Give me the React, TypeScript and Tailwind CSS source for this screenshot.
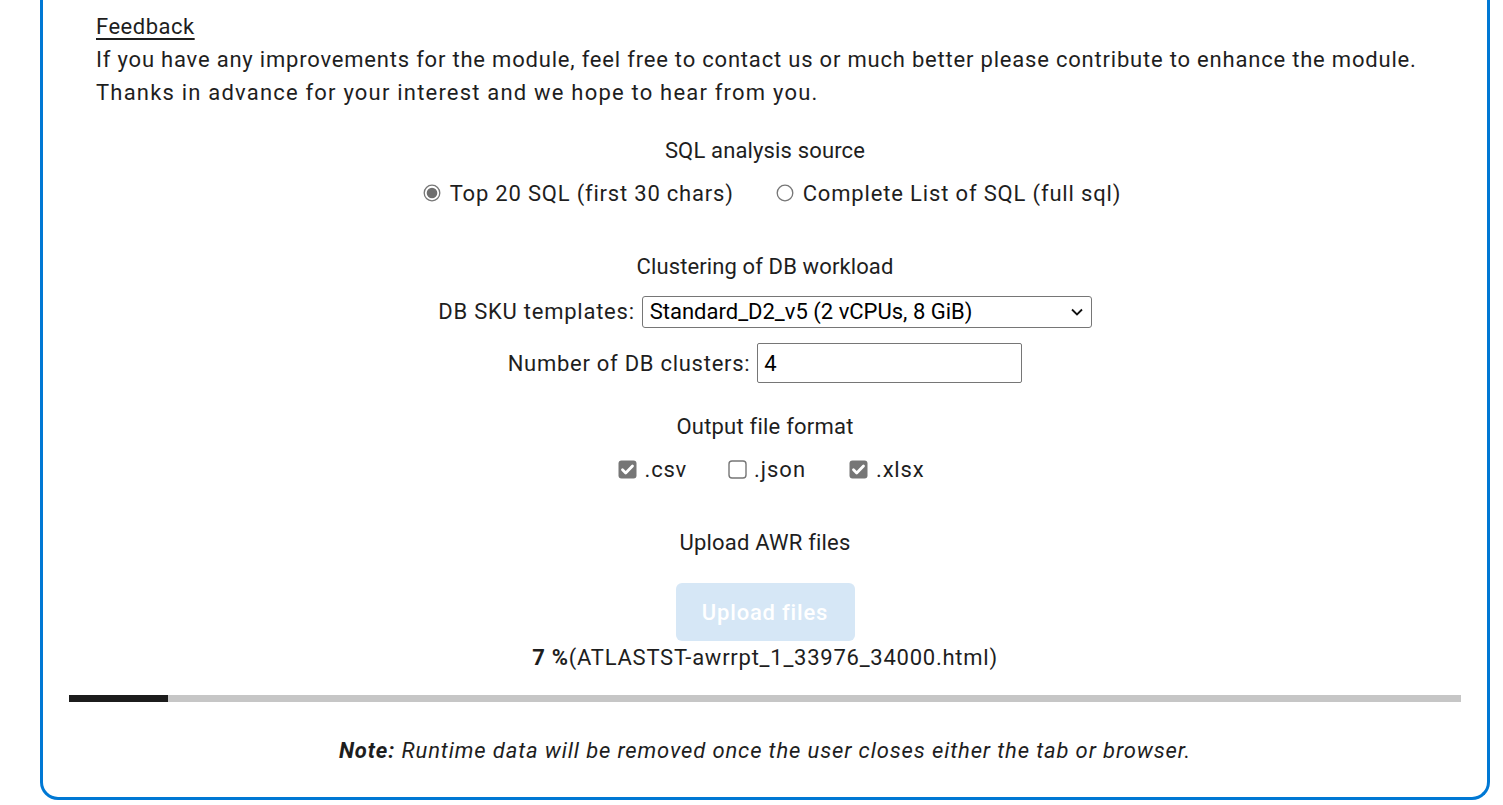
import React from "react";

function Radio({ checked }: { checked?: boolean }) {
  return (
    <svg width="18" height="18" viewBox="0 0 18 18" className="shrink-0">
      <circle cx="9" cy="9" r="7.8" fill="white" stroke="#767676" strokeWidth="1.3" />
      {checked && <circle cx="9" cy="9" r="5.3" fill="#6e6e6e" />}
    </svg>
  );
}

function Check({ checked }: { checked?: boolean }) {
  return (
    <svg width="19" height="19" viewBox="0 0 19 19" className="shrink-0">
      {checked ? (
        <>
          <rect x="0.5" y="0.5" width="18" height="18" rx="3" fill="#767676" />
          <path d="M4.5 9.8l3.2 3.2 6.8-7" stroke="white" strokeWidth="2.8" fill="none" strokeLinecap="round" strokeLinejoin="round" />
        </>
      ) : (
        <rect x="1" y="1" width="17" height="17" rx="3" fill="white" stroke="#767676" strokeWidth="1.4" />
      )}
    </svg>
  );
}

export default function App() {
  return (
    <div className="w-[1503px] h-[805px] bg-white overflow-hidden" style={{ fontFamily: "Roboto, 'Noto Sans', sans-serif" }}>
      <div className="ml-[40px] w-[1450px] border-x-[3px] border-b-[3px] border-[#0078d4] rounded-b-[18px] text-[22px] leading-[33px] text-[#1e1e1e] pt-[9.5px] pb-[29.5px]">
        <div className="pl-[53px]">
          <div className="underline underline-offset-[4px] tracking-[0.5px]">Feedback</div>
          <div className="tracking-[0.8px]">If you have any improvements for the module, feel free to contact us or much better please contribute to enhance the module.</div>
          <div className="tracking-[1.2px]">Thanks in advance for your interest and we hope to hear from you.</div>
        </div>

        <div className="flex flex-col items-center">
          <div className="mt-[25px] tracking-[0.15px]">SQL analysis source</div>
          <div className="mt-[10px] flex items-center pl-[14px]">
            <label className="flex items-center">
              <Radio checked />
              <span className="ml-[9px] tracking-[0.8px]">Top 20 SQL (first 30 chars)</span>
            </label>
            <label className="flex items-center ml-[42px]">
              <Radio />
              <span className="ml-[9px] tracking-[0.84px]">Complete List of SQL (full sql)</span>
            </label>
          </div>

          <div className="mt-[40px] tracking-[0.12px]">Clustering of DB workload</div>
          <div className="mt-[12.5px] flex items-center">
            <span className="tracking-[0.76px]">DB SKU templates:</span>
            <div className="ml-[7px] relative w-[450px] h-[32px] border border-[#767676] rounded-[3px] flex items-center px-[7px] text-black">
              <span>Standard_D2_v5 (2 vCPUs, 8 GiB)</span>
              <svg className="absolute right-[7px] top-[9px]" width="14" height="12" viewBox="0 0 14 12" fill="none">
                <path d="M2 3.5l5 5 5-5" stroke="#111" strokeWidth="1.8" />
              </svg>
            </div>
          </div>
          <div className="mt-[15px] flex items-center">
            <span className="tracking-[0.73px]">Number of DB clusters:</span>
            <div className="ml-[7px] w-[265px] h-[40px] border border-[#767676] rounded-[2px] flex items-center px-[6px] text-black">4</div>
          </div>

          <div className="mt-[26.5px] tracking-[0.22px]">Output file format</div>
          <div className="mt-[10px] flex items-center pl-[12px]">
            <label className="flex items-center">
              <Check checked />
              <span className="ml-[8px] tracking-[0.75px]">.csv</span>
            </label>
            <label className="flex items-center ml-[41px]">
              <Check />
              <span className="ml-[7px] tracking-[1px]">.json</span>
            </label>
            <label className="flex items-center ml-[43px]">
              <Check checked />
              <span className="ml-[8px] tracking-[0.8px]">.xlsx</span>
            </label>
          </div>

          <div className="mt-[40px] tracking-[0.2px]">Upload AWR files</div>
          <button className="mt-[24.5px] w-[179px] h-[58px] rounded-[6px] bg-[#d6e7f6] text-white font-medium tracking-[0.8px]">Upload files</button>
          <div className="tracking-[0.75px]">
            <span className="font-bold">7 %</span>(ATLASTST-awrrpt_1_33976_34000.html)
          </div>
        </div>

        <div className="mx-[26px] mt-[20.5px] h-[7px] bg-[#c6c6c6]">
          <div className="h-full bg-[#1c1c1c]" style={{ width: "7.1%" }} />
        </div>

        <div className="mt-[32.5px] text-center italic tracking-[0.87px]">
          <span className="font-bold">Note:</span> Runtime data will be removed once the user closes either the tab or browser.
        </div>
      </div>
    </div>
  );
}
